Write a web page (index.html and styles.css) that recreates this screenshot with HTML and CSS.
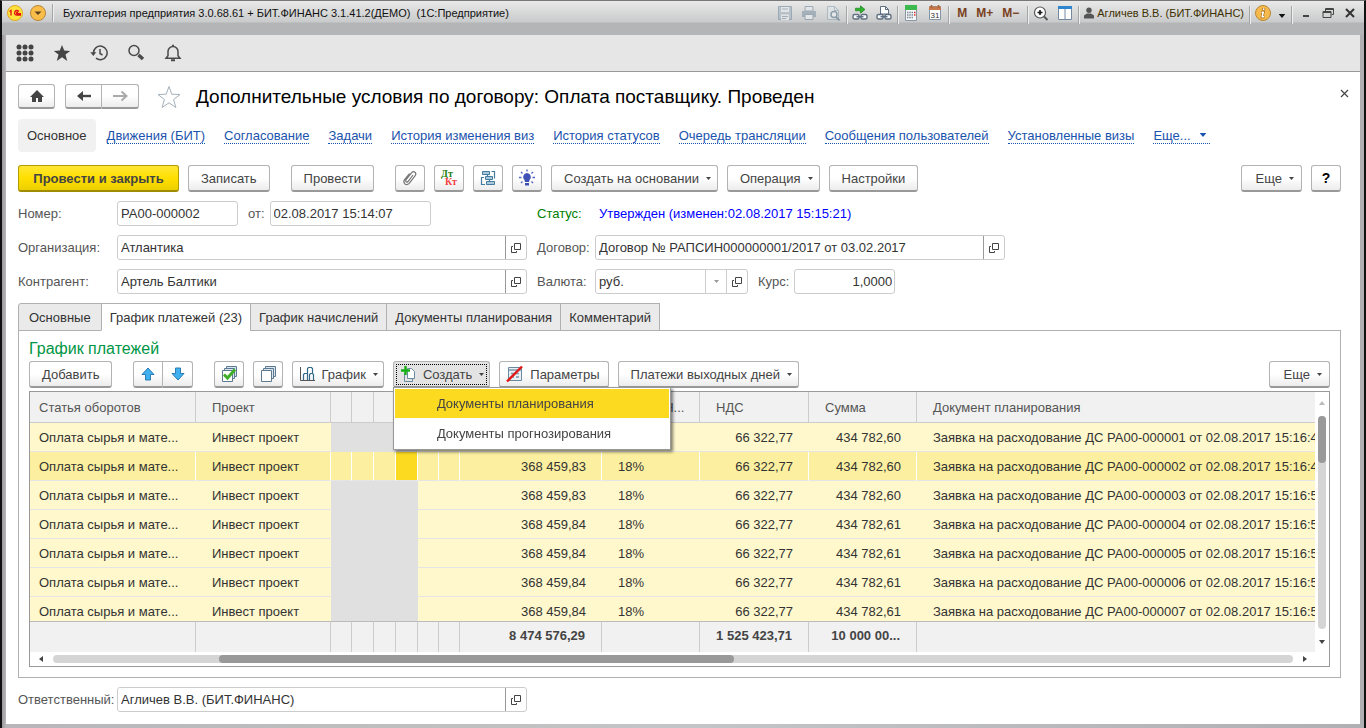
FILE: index.html
```html
<!DOCTYPE html>
<html lang="ru">
<head>
	<meta charset="utf-8">
	<title>Бухгалтерия предприятия</title>
	<link rel="stylesheet" href="styles.css">
</head>
<body>

	<!-- shared icons -->
	<svg class="sprite">
		<symbol id="open" viewBox="0 0 10 10">
			<path d="M3.500 .5h6v6h-6zM2 3.500H.5v6h5V8" fill="none" stroke="#444"/>
		</symbol>
		<symbol id="caret" viewBox="0 0 5 3"><path d="M0 0h5L2.500 3z" fill="currentColor"/></symbol>
	</svg>

	<div class="window">

		<header class="titlebar">
			<svg class="logo" viewBox="0 0 16 16">
				<circle cx="8" cy="8" r="7.500" fill="#ffe23e" stroke="#e0a81e"/>
				<path d="M2.500 6.500l1.500-1v5M12 6.500q-2.500-2-4 0-1.200 2.500 1 3.500h5M11 7.700q-1.200-.6-1.500.4 0 .6 1 .6h3.500" fill="none" stroke="#e01010" stroke-width="1.300"/>
			</svg>
			<button class="round" aria-label="Меню">
				<svg viewBox="0 0 16 16">
					<circle cx="8" cy="8" r="7.500" fill="#f9bd4a" stroke="#b98735"/>
					<path d="M4.500 6.500h7L8 10z" fill="#5a4020"/>
				</svg>
			</button>
			<i class="sep"></i>
			<div class="app-name">Бухгалтерия предприятия 3.0.68.61 + БИТ.ФИНАНС 3.1.41.2(ДЕМО)  (1С:Предприятие)</div>

			<div class="tools">
				<div class="tool-group">
					<button aria-label="Сохранить" class="dim"><svg viewBox="0 0 16 16"><path d="M1.500 1.500h13v13h-13z" fill="#a9b8c4" stroke="#8496a5"/><path d="M4 2h8v5H4zM4 9.500h8V15H4z" fill="#e6eaed"/><path d="M5 4h6M5 11.500h6M5 13.500h4" stroke="#8fa0ad"/></svg></button>
					<button aria-label="Печать" class="dim"><svg viewBox="0 0 16 16"><path d="M4 1.500h8V6H4z" fill="#e4e8eb" stroke="#8496a5"/><path d="M1 6h14v6H1z" fill="#8fa1af"/><path d="M4 9.500h8v5H4z" fill="#eceff1" stroke="#8496a5"/></svg></button>
					<button aria-label="Просмотр" class="dim"><svg viewBox="0 0 16 16"><path d="M2.500 1.500h7l4 4v9h-11z" fill="#dfe5e9" stroke="#9bacb8"/><path d="M9.500 1.500v4h4" fill="none" stroke="#9bacb8"/><circle cx="9" cy="9.500" r="3" fill="#edf1f3" stroke="#6f8799" stroke-width="1.500"/><path d="M11 12l3.500 3.500" stroke="#6f8799" stroke-width="2"/></svg></button>
				</div>
				<i class="sep"></i>
				<div class="tool-group">
					<button aria-label="Перейти"><svg viewBox="0 0 16 16"><path d="M3.500 3.200h5V.8l4.500 3.700-4.500 3.700V5.800h-5z" fill="#2bb52b" stroke="#137013" stroke-width=".6"/><rect x="1" y="9.500" width="6" height="4.500" rx="1.500" fill="#fff" stroke="#5d6f80" stroke-width="1.400"/><rect x="9" y="9.500" width="6" height="4.500" rx="1.500" fill="#fff" stroke="#5d6f80" stroke-width="1.400"/><path d="M4.500 11.700h7" stroke="#5d6f80" stroke-width="1.400"/></svg></button>
					<button aria-label="Ссылка"><svg viewBox="0 0 16 16"><path d="M4.500 1.500h5l3 3V9h-8z" fill="#fff" stroke="#5d6f80"/><path d="M9.500 1.500v3h3" fill="none" stroke="#5d6f80"/><rect x="1" y="9.500" width="6" height="4.500" rx="1.500" fill="#fff" stroke="#5d6f80" stroke-width="1.400"/><rect x="9" y="9.500" width="6" height="4.500" rx="1.500" fill="#fff" stroke="#5d6f80" stroke-width="1.400"/><path d="M4.500 11.700h7" stroke="#5d6f80" stroke-width="1.400"/></svg></button>
				</div>
				<i class="sep"></i>
				<div class="tool-group">
					<button aria-label="Калькулятор"><svg viewBox="0 0 16 16"><path d="M2.500 .500h11v15h-11z" fill="#f4f6f7" stroke="#8b98a3"/><path d="M2 0h12v5H2z" fill="#3cb94f"/><path d="M4 7.500h6M4 10h6M4 12.500h6" stroke="#7b8a97" stroke-width="1.500" stroke-dasharray="1.500 .8"/><path d="M11 7.500h1.500M11 10h1.500" stroke="#e03030" stroke-width="1.500"/></svg></button>
					<button aria-label="Календарь"><svg viewBox="0 0 16 16"><path d="M2.500 1.500h11v13h-11z" fill="#fff" stroke="#8496a5"/><path d="M2 1.500h12V5H2z" fill="#c8794c"/><path d="M4.500 0v3M11.500 0v3" stroke="#a86238" stroke-width="1.500"/><text x="8" y="13" text-anchor="middle" class="day">31</text></svg></button>
				</div>
				<i class="sep"></i>
				<div class="tool-group memory">
					<button>M</button>
					<button>M+</button>
					<button>M−</button>
				</div>
				<i class="sep"></i>
				<div class="tool-group">
					<button aria-label="Масштаб"><svg viewBox="0 0 16 16"><circle cx="7" cy="7.500" r="5.500" fill="#fff" stroke="#555" stroke-width="1.200"/><path d="M7 5v5M4.500 7.500h5" stroke="#111" stroke-width="1.600"/><path d="M11 11.500l3.500 3.500" stroke="#555" stroke-width="2"/></svg></button>
					<button aria-label="Панели"><svg viewBox="0 0 16 16"><path d="M1.500 1.500h13v13h-13z" fill="#fff" stroke="#7289a0"/><path d="M1 1h14v3H1z" fill="#2f86cf"/><path d="M8 4v10.500" stroke="#7289a0"/></svg></button>
				</div>
				<i class="sep"></i>
				<div class="user">
					<svg viewBox="0 0 10 12"><circle cx="5" cy="3.200" r="2.700" fill="#555"/><path d="M0 11.500V8.500L3 6.500h4l3 2v3z" fill="#555"/></svg>
					<span>Агличев В.В. (БИТ.ФИНАНС)</span>
				</div>
				<i class="sep"></i>
				<div class="tool-group info">
					<button aria-label="Справка"><svg viewBox="0 0 16 16"><circle cx="8" cy="8" r="7.500" fill="#f6b94b" stroke="#b98735"/><path d="M8.700 3v2.200M6.300 7.200h1.900l-1 4.600h2.200" fill="none" stroke="#9a5f10" stroke-width="2.800"/><path d="M8.700 3.200v1.800M6.500 7.200h1.700l-1 4.600h2" fill="none" stroke="#fff" stroke-width="1.600"/></svg></button>
					<button aria-label="Еще" class="more"><svg viewBox="0 0 5 3"><use href="#caret"/></svg></button>
				</div>
				<i class="sep"></i>
				<div class="tool-group win">
					<button aria-label="Свернуть"><svg viewBox="0 0 12 12"><path d="M3 9h6" stroke="#444" stroke-width="2"/></svg></button>
					<button aria-label="Восстановить"><svg viewBox="0 0 12 12"><path d="M3.500 4V1.500h8v6h-2M1 4.500h8v6H1zM1 5.500h8M3.500 2.500h8" fill="none" stroke="#444"/></svg></button>
					<button aria-label="Закрыть"><svg viewBox="0 0 12 12"><path d="M2 2l8 8M10 2l-8 8" stroke="#333" stroke-width="2"/></svg></button>
				</div>
			</div>
		</header>

		<div class="client">

			<nav class="mainbar">
				<button aria-label="Меню функций"><svg viewBox="0 0 18 18" fill="#444"><circle cx="3" cy="3" r="2.500"/><circle cx="9" cy="3" r="2.500"/><circle cx="15" cy="3" r="2.500"/><circle cx="3" cy="9" r="2.500"/><circle cx="9" cy="9" r="2.500"/><circle cx="15" cy="9" r="2.500"/><circle cx="3" cy="15" r="2.500"/><circle cx="9" cy="15" r="2.500"/><circle cx="15" cy="15" r="2.500"/></svg></button>
				<button aria-label="Избранное"><svg viewBox="0 0 18 18"><path d="M9 1l2.200 5.600 6 .3-4.700 3.700L14.200 17 9 13.300 3.800 17l1.700-6.400L.8 6.900l6-.3z" fill="#444"/></svg></button>
				<button aria-label="История"><svg viewBox="0 0 18 18"><path d="M3.500 9A6.800 6.800 0 1 1 6 14.200" fill="none" stroke="#4a4a4a" stroke-width="1.500"/><path d="M.3 8.300h6L3.300 12z" fill="#4a4a4a"/><path d="M10 5v4.500l2.500 1.500" fill="none" stroke="#4a4a4a" stroke-width="1.500"/></svg></button>
				<button aria-label="Поиск"><svg viewBox="0 0 18 18"><circle cx="7" cy="6.500" r="5" fill="none" stroke="#4a4a4a" stroke-width="1.500"/><path d="M11.500 11l4.500 4" stroke="#4a4a4a" stroke-width="3.400"/></svg></button>
				<button aria-label="Уведомления"><svg viewBox="0 0 18 18"><path d="M2 14.200h14l-2-2.500V7.500a5 5 0 0 0-10 0v4.200z" fill="none" stroke="#4a4a4a" stroke-width="1.500"/><path d="M9 .800v2M7 16.300h4" stroke="#4a4a4a" stroke-width="2"/></svg></button>
			</nav>

			<main class="form">

				<div class="heading">
					<button class="btn home" aria-label="Домой"><svg width="16" height="14" viewBox="0 0 16 14"><path d="M8 1L1 8h2v5h4V9h2v4h4V8h2z" fill="#444"/></svg></button>
					<div class="pair">
						<button class="btn" aria-label="Назад"><svg width="16" height="12" viewBox="0 0 16 12"><path d="M3 6h12" stroke="#444" stroke-width="2.400"/><path d="M7 1v10L1 6z" fill="#444"/></svg></button>
						<button class="btn" aria-label="Вперед"><svg width="16" height="12" viewBox="0 0 16 12"><path d="M1 6h12" stroke="#aaa" stroke-width="2"/><path d="M9.500 1.500L14.500 6l-5 4.500" fill="none" stroke="#aaa" stroke-width="2"/></svg></button>
					</div>
					<svg class="star" viewBox="0 0 24 24"><path d="M12 1.500l2.800 7.700 8.200.3-6.400 5 2.300 8L12 17.800l-6.900 4.700 2.300-8L1 9.500l8.200-.3z" fill="#fff" stroke="#a5b1bb"/></svg>
					<h1>Дополнительные условия по договору: Оплата поставщику. Проведен</h1>
					<button class="close" aria-label="Закрыть форму"><svg viewBox="0 0 9 9"><path d="M1 1l7 7M8 1L1 8" stroke="#444" stroke-width="1.200"/></svg></button>
				</div>

				<nav class="links">
					<span class="current-page">Основное</span>
					<a href="#">Движения (БИТ)</a>
					<a href="#">Согласование</a>
					<a href="#">Задачи</a>
					<a href="#">История изменения виз</a>
					<a href="#">История статусов</a>
					<a href="#">Очередь трансляции</a>
					<a href="#">Сообщения пользователей</a>
					<a href="#">Установленные визы</a>
					<a href="#">Еще...<svg class="link-caret" viewBox="0 0 5 3"><use href="#caret"/></svg></a>
				</nav>

				<div class="commands">
					<button class="btn primary">Провести и закрыть</button>
					<button class="btn">Записать</button>
					<button class="btn apart">Провести</button>
					<button class="btn icon apart" aria-label="Файлы"><svg width="16" height="18" viewBox="0 0 16 18"><path d="M11 6l-5 6.500q-1 1.200-2 .4-.9-.9.100-2.200l5.600-7q1.600-1.800 3.300-.5 1.600 1.500.2 3.500l-6 7.600q-2.200 2.200-4.300.6-2-1.900-.3-4.200L7.500 4.500" fill="none" stroke="#777" stroke-width="1.200"/></svg></button>
					<button class="btn icon" aria-label="Дт Кт"><svg width="18" height="18" viewBox="0 0 18 18"><text x="1" y="8" class="dt">Дт</text><text x="5" y="16" class="dt kt">Кт</text></svg></button>
					<button class="btn icon" aria-label="Структура"><svg width="18" height="18" viewBox="0 0 18 18"><path d="M3.500 2.500h7v3h-7zM6.500 7.500h7v3h-7zM7.500 12.500h8v3h-8z" fill="#a9c8dc" stroke="#447c9f"/><path d="M12.500 2.500h3v7M5 8.500H2.500v7H6M8.500 5.500v2M10.500 10.500v2" fill="none" stroke="#447c9f" stroke-width="1.200"/></svg></button>
					<button class="btn icon" aria-label="Подсказка"><svg width="18" height="18" viewBox="0 0 18 18"><path d="M9 4a4 4 0 0 1 2.500 7L11 13H7l-.5-2A4 4 0 0 1 9 4z" fill="#3f51b5"/><path d="M7 14h4v2.500H7z" fill="#3f51b5"/><path d="M9 .500v2M3 3l1.500 1.500M15 3l-1.500 1.500M1 8.500h2.500M14.500 8.500H17M3 14l1.500-1.500M15 14l-1.500-1.500" stroke="#5666c0" stroke-width="1.400"/></svg></button>
					<button class="btn drop">Создать на основании<svg class="caret" viewBox="0 0 5 3"><use href="#caret"/></svg></button>
					<button class="btn drop">Операция<svg class="caret" viewBox="0 0 5 3"><use href="#caret"/></svg></button>
					<button class="btn">Настройки</button>
					<button class="btn drop right">Еще<svg class="caret" viewBox="0 0 5 3"><use href="#caret"/></svg></button>
					<button class="btn icon help">?</button>
				</div>

				<div class="fields">
					<label for="number">Номер:</label>
					<div class="line">
						<input id="number" class="w-number" value="РА00-000002">
						<label for="date" class="mid">от:</label>
						<input id="date" class="w-date" value="02.08.2017 15:14:07">
					</div>
					<span class="second status">Статус:</span>
					<span class="status-value">Утвержден (изменен:02.08.2017 15:15:21)</span>

					<label for="org">Организация:</label>
					<div class="picker">
						<input id="org" value="Атлантика">
						<button aria-label="Открыть"><svg><use href="#open"/></svg></button>
					</div>
					<label for="contract" class="second">Договор:</label>
					<div class="picker">
						<input id="contract" value="Договор № РАПСИН000000001/2017 от 03.02.2017">
						<button aria-label="Открыть"><svg><use href="#open"/></svg></button>
					</div>

					<label for="partner">Контрагент:</label>
					<div class="picker">
						<input id="partner" value="Артель Балтики">
						<button aria-label="Открыть"><svg><use href="#open"/></svg></button>
					</div>
					<label for="currency" class="second">Валюта:</label>
					<div class="line">
						<div class="picker currency">
							<select id="currency"><option>руб.</option></select>
							<span class="arrow"><svg class="caret" viewBox="0 0 5 3"><use href="#caret"/></svg></span>
							<button aria-label="Открыть"><svg><use href="#open"/></svg></button>
						</div>
						<label for="rate" class="mid">Курс:</label>
						<input id="rate" class="w-rate" value="1,0000">
					</div>
				</div>

				<div class="tabs">
					<button>Основные</button>
					<button class="active">График платежей (23)</button>
					<button>График начислений</button>
					<button>Документы планирования</button>
					<button>Комментарий</button>
				</div>

				<section class="panel">
					<h2>График платежей</h2>

					<div class="commands">
						<button class="btn">Добавить</button>
						<div class="pair apart">
							<button class="btn icon" aria-label="Вверх"><svg width="14" height="14" viewBox="0 0 14 14"><path d="M7 1l6 6.500H9.500V13h-5V7.500H1z" fill="#41b0ee" stroke="#2b7db3"/></svg></button>
							<button class="btn icon" aria-label="Вниз"><svg width="14" height="14" viewBox="0 0 14 14"><path d="M7 13l6-6.500H9.500V1h-5v5.500H1z" fill="#41b0ee" stroke="#2b7db3"/></svg></button>
						</div>
						<button class="btn icon apart" aria-label="Отметить все"><svg width="18" height="18" viewBox="0 0 18 18"><path d="M6.500 4V1.500h10v10H14M4.500 6V3.500h10v10H12" fill="#dbe6ee" stroke="#5b7a91"/><path d="M2.500 5.500h10v11h-10z" fill="#fff" stroke="#5b7a91"/><path d="M4 9.500l3.500 3.500L15 4.500" fill="none" stroke="#3fae29" stroke-width="3"/></svg></button>
						<button class="btn icon" aria-label="Снять отметки"><svg width="18" height="18" viewBox="0 0 18 18"><path d="M6.500 4V1.500h10v10H14M4.500 6V3.500h10v10H12" fill="#dbe6ee" stroke="#5b7a91"/><path d="M2.500 5.500h10v11h-10z" fill="#fff" stroke="#5b7a91"/></svg></button>
						<button class="btn drop with-icon"><svg width="16" height="16" viewBox="0 0 16 16"><path d="M1.500 1v13.500H16" fill="none" stroke="#555"/><path d="M4.500 14V8.500l1-1h3v6.500M8.500 7.500v-5l1-1h3l1 1v5M10.500 14V8.500l1-1h2l1 1V14" fill="none" stroke="#34698c" stroke-width="1.200"/></svg>График<svg class="caret" viewBox="0 0 5 3"><use href="#caret"/></svg></button>
						<div class="menu-host">
							<button class="btn drop with-icon pressed"><svg width="16" height="16" viewBox="0 0 16 16"><path d="M6.500 2.500h4l3 3v7h-7z" fill="#fff" stroke="#6a8aa0"/><path d="M3.500 7v8.500h8V13" fill="none" stroke="#6a8aa0"/><path d="M4.500 0v9M0 4.500h9" stroke="#16b016" stroke-width="2.400"/></svg>Создать<svg class="caret" viewBox="0 0 5 3"><use href="#caret"/></svg></button>
							<div class="menu">
								<button class="selected">Документы планирования</button>
								<button>Документы прогнозирования</button>
							</div>
						</div>
						<button class="btn with-icon"><svg width="18" height="18" viewBox="0 0 18 18"><path d="M2.500 2.500h13v13h-13z" fill="#e9eff3" stroke="#6a8aa0"/><path d="M3 5h12M5 8.500h3M5 12h3M10 8.500h3M10 12h3" stroke="#7d9ab0" stroke-width="1.400"/><path d="M1 16.500L16 1.500" stroke="#e01818" stroke-width="2.400"/></svg>Параметры</button>
						<button class="btn drop">Платежи выходных дней<svg class="caret" viewBox="0 0 5 3"><use href="#caret"/></svg></button>
						<button class="btn drop right">Еще<svg class="caret" viewBox="0 0 5 3"><use href="#caret"/></svg></button>
					</div>

					<div class="grid">
						<div class="viewport">
							<table>
								<colgroup>
									<col class="c-item"><col class="c-project">
									<col class="c-narrow"><col class="c-mark"><col class="c-mark"><col class="c-mark"><col class="c-narrow"><col class="c-narrow">
									<col class="c-net"><col class="c-rate"><col class="c-vat"><col class="c-sum"><col>
								</colgroup>
								<thead>
									<tr>
										<th>Статья оборотов</th><th class="pad">Проект</th>
										<th></th><th></th><th></th><th></th><th></th><th></th>
										<th></th><th class="pad">Ставка Н...</th><th class="pad">НДС</th><th class="pad">Сумма</th><th class="pad">Документ планирования</th>
									</tr>
								</thead>
								<tbody id="rows"></tbody>
								<tfoot>
									<tr>
										<td></td><td></td><td></td><td></td><td></td><td></td><td></td><td></td>
										<td class="num">8 474 576,29</td><td></td><td class="num">1 525 423,71</td><td class="num">10 000 00...</td><td></td>
									</tr>
								</tfoot>
							</table>
						</div>
						<div class="vscroll">
							<svg class="up" viewBox="0 0 6 4"><path d="M0 4h6L3 0z"/></svg>
							<div class="track"><div class="thumb"></div></div>
							<svg viewBox="0 0 6 4"><path d="M0 0h6L3 4z"/></svg>
						</div>
						<div class="hscroll">
							<svg viewBox="0 0 4 6"><path d="M4 0v6L0 3z"/></svg>
							<div class="track"><div class="thumb"></div></div>
							<svg viewBox="0 0 4 6"><path d="M0 0v6l4-3z"/></svg>
						</div>
					</div>
				</section>

				<div class="fields">
					<label for="owner">Ответственный:</label>
					<div class="picker">
						<input id="owner" value="Агличев В.В. (БИТ.ФИНАНС)">
						<button aria-label="Открыть"><svg><use href="#open"/></svg></button>
					</div>
				</div>

			</main>
		</div>
	</div>

	<script>
		// net amount, total, time of the planning document
		let rows = [
			['368 459,83', '434 782,60', '15:16:48'],
			['368 459,83', '434 782,60', '15:16:49'],
			['368 459,83', '434 782,60', '15:16:50'],
			['368 459,84', '434 782,61', '15:16:51'],
			['368 459,84', '434 782,61', '15:16:52'],
			['368 459,84', '434 782,61', '15:16:53'],
			['368 459,84', '434 782,61', '15:16:54']
		];
		let current = 1;

		let html = '';
		rows.forEach(function(row, i){
			let marks = '<td class="off"></td>'.repeat(4);
			if(i === current){
				marks = '<td></td><td></td><td></td><td class="cell"></td>';
			}
			html += '<tr' + (i === current ? ' class="current"' : '') + '>'
				+ '<td>Оплата сырья и мате...</td><td class="pad">Инвест проект</td>'
				+ marks + '<td></td><td></td>'
				+ '<td class="num">' + row[0] + '</td><td class="pad">18%</td>'
				+ '<td class="num">66 322,77</td><td class="num">' + row[1] + '</td>'
				+ '<td class="pad">Заявка на расходование ДС РА00-00000' + (i + 1) + ' от 02.08.2017 ' + row[2] + '</td></tr>';
		});
		document.querySelector('#rows').innerHTML = html;
	</script>

</body>
</html>
```
FILE: styles.css
```css
*{
	box-sizing: border-box;
}

body{
	margin: 0;
	font-family: "Liberation Sans", Arial, sans-serif;
	font-size: 13px;
	color: #333;
}

button, input, select{
	font: inherit;
	color: inherit;
	margin: 0;
}

button{
	padding: 0;
	border: none;
	background: none;
	white-space: nowrap;
}

.sprite{
	display: none;
}

svg{
	display: block;
	flex: none;
}

/* window frame */

.window{
	display: flex;
	flex-direction: column;
	min-height: 100vh;
	padding: 0 4px 5px;
	border-left: 2px solid #111;
	border-right: 2px solid #111;
	border-top: 1px solid #777;
	background: linear-gradient(90deg, #9c9a9c, #b8b6b8 4px, #c4c5c6 50%, #b0b0b2);
}

.titlebar{
	display: flex;
	align-items: center;
	height: 34px;
	margin: 0 -4px;
	padding: 0 8px 10px 5px;
	background: linear-gradient(#e9e9e9, #c9cacb 21px, #b4b5b7 22px, #b4b5b7);
	font-size: 11px;
	color: #111;
}

.titlebar svg{
	width: 16px;
	height: 16px;
}

.round{
	margin-left: 7px;
}

.sep{
	align-self: flex-start;
	width: 1px;
	height: 18px;
	margin-top: 3px;
	background: #a5a5a5;
	box-shadow: 1px 0 #eee;
}

.titlebar > .sep{
	margin-left: 6px;
}

.app-name{
	margin-left: 10px;
	white-space: pre;
}

.tools{
	display: flex;
	align-items: center;
	gap: 5px;
	margin-left: auto;
}

.tool-group{
	display: flex;
	align-items: center;
	gap: 8px;
}

.dim{
	opacity: .7;
}

.day{
	font-size: 8px;
	fill: #333;
}

.memory{
	padding: 0 3px;
	gap: 9px;
	font-size: 12px;
	font-weight: bold;
	color: #7a4020;
}

.user{
	display: flex;
	align-items: center;
	gap: 3px;
	color: #3d3000;
}

.titlebar .user svg{
	width: 10px;
	height: 12px;
}

.info{
	gap: 7px;
}

.titlebar .more svg{
	width: 8px;
	height: 4px;
	margin-top: 6px;
}

.win{
	gap: 10px;
	margin-left: 3px;
}

.titlebar .win svg{
	width: 12px;
	height: 12px;
}

.client{
	flex: 1;
	background: #fff;
}

.mainbar{
	display: flex;
	align-items: center;
	gap: 19px;
	height: 37px;
	padding-left: 10px;
	background: #e6e6e6;
	border-bottom: 1px solid #999;
}

.mainbar svg{
	width: 18px;
	height: 18px;
}

/* form */

.form{
	padding: 12px 19px 12px 12px;
}

.btn{
	display: flex;
	align-items: center;
	justify-content: center;
	height: 27px;
	padding: 0 12px;
	border: 1px solid #b3b3b3;
	border-bottom: 2px solid #999;
	border-radius: 3px;
	background: linear-gradient(#fff 50%, #ececec);
	color: #444;
}

.heading{
	display: flex;
	align-items: center;
	height: 25px;
}

.heading .btn{
	width: 37px;
	height: 25px;
	padding: 0;
}

.pair{
	display: flex;
}

.pair .btn:first-child{
	border-radius: 3px 0 0 3px;
}

.pair .btn:last-child{
	border-left: none;
	border-radius: 0 3px 3px 0;
}

.heading .pair{
	margin-left: 10px;
}

.star{
	width: 24px;
	height: 24px;
	margin-left: 18px;
}

h1{
	margin: 0 0 0 15px;
	font-size: 19px;
	font-weight: normal;
	color: #000;
}

.close{
	align-self: flex-start;
	margin: 5px -8px 0 auto;
}

.close svg{
	width: 9px;
	height: 9px;
}

.links{
	display: flex;
	align-items: center;
	gap: 19px;
	margin-top: 10px;
}

.current-page{
	padding: 9px;
	margin-right: -8px;
	border-radius: 4px;
	background: #f1f1f1;
	line-height: 15px;
}

.links a{
	display: flex;
	align-items: center;
	color: #1a53ad;
	line-height: 15px;
	text-decoration: none;
	border-bottom: 1px dotted #1a53ad;
}

.link-caret{
	width: 8px;
	height: 4px;
	margin: 0 3px 0 8px;
}

.commands{
	display: flex;
	gap: 9px;
	margin-top: 13px;
}

.primary{
	min-width: 161px;
	border-color: #b39b00;
	border-bottom-color: #a08c00;
	background: linear-gradient(#ffe735, #ffdf00 50%, #eccf00);
	font-weight: bold;
}

.apart{
	margin-left: 12px;
}

.icon{
	width: 30px;
	padding: 0;
}

.caret{
	width: 5px;
	height: 3px;
	margin-left: 7px;
}

.drop{
	padding-right: 6px;
}

.right{
	margin-left: auto;
	padding: 0 7px 0 14px;
}

.help{
	font-size: 14px;
	font-weight: bold;
	color: #000;
}

.dt{
	font-family: "Liberation Serif", serif;
	font-size: 10px;
	font-weight: bold;
	fill: #1f8010;
}

.kt{
	fill: #f04040;
}

.fields{
	display: grid;
	grid-template-columns: 99px 410px 68px 410px;
	grid-auto-rows: 25px;
	row-gap: 9px;
	align-items: center;
	margin-top: 9px;
}

.fields label{
	color: #555;
	white-space: nowrap;
}

.second{
	padding-left: 10px;
}

.status{
	color: #008000;
}

.status-value{
	padding-left: 4px;
	color: #00f;
}

.line{
	display: flex;
	align-items: center;
}

.mid{
	margin: 0 5px 0 10px;
}

input, select{
	height: 25px;
	min-width: 0;
	padding: 0 3px;
	border: 1px solid #ccc;
	border-radius: 3px;
	background: #fff;
}

.w-number{
	width: 121px;
}

.w-date{
	width: 161px;
}

.w-rate{
	width: 101px;
	text-align: right;
	padding-right: 2px;
}

.picker{
	display: flex;
	height: 25px;
	border: 1px solid #ccc;
	border-radius: 3px;
}

.picker input, .picker select{
	flex: 1;
	height: 23px;
	border: none;
	appearance: none;
}

.picker button, .arrow{
	display: flex;
	align-items: center;
	justify-content: center;
	width: 21px;
	border-left: 1px solid #999;
}

.picker button svg{
	width: 10px;
	height: 10px;
}

.currency{
	width: 153px;
}

.currency button, .arrow{
	border-left-color: #ccc;
}

.arrow{
	color: #999;
}

.arrow .caret{
	margin: 0;
}

/* tabs */

.tabs{
	display: flex;
	margin-top: 9px;
	position: relative;
}

.tabs button{
	height: 28px;
	padding: 0 8px;
	margin-right: -1px;
	border: 1px solid #b0b0b0;
	background: #eaeaea;
}

.tabs button:first-child{
	padding: 0 10px;
	border-radius: 3px 0 0 0;
}

.tabs .active{
	background: #fff;
	border-bottom-color: #fff;
}

.panel{
	margin-top: -1px;
	padding: 10px;
	border: 1px solid #b0b0b0;
}

h2{
	margin: 0;
	font-size: 16px;
	line-height: 16px;
	font-weight: normal;
	color: #009646;
}

.panel .commands{
	margin-top: 4px;
}

.with-icon{
	padding-left: 6px;
	padding-right: 8px;
}

.with-icon.drop{
	padding-right: 5px;
}

.with-icon > svg:first-child{
	margin-right: 6px;
}

.menu-host{
	position: relative;
}

.pressed{
	padding-left: 7px;
	background: #e3e3e3;
	outline: 1px dotted #000;
	outline-offset: -4px;
}

.menu{
	position: absolute;
	z-index: 2;
	top: 26px;
	left: 0;
	display: flex;
	flex-direction: column;
	gap: 1px;
	width: 278px;
	padding: 1px;
	border: 1px solid #999;
	background: #fff;
	box-shadow: 2px 2px 3px rgba(0,0,0,.5);
}

.menu button{
	height: 29px;
	padding-left: 42px;
	text-align: left;
	color: #444;
}

.menu .selected{
	background: #fcda20;
}

/* payment table */

.grid{
	display: grid;
	grid-template-columns: 1fr 14px;
	margin-top: 3px;
	border: 1px solid #999;
}

.viewport{
	height: 260px;
	overflow: hidden;
}

table{
	width: 100%;
	table-layout: fixed;
	border-collapse: separate;
	border-spacing: 0;
}

.c-item{ width: 166px; }
.c-project{ width: 135px; }
.c-mark{ width: 22px; }
.c-narrow{ width: 21px; }
.c-net{ width: 142px; }
.c-rate{ width: 98px; }
.c-vat{ width: 109px; }
.c-sum{ width: 108px; }

th, td{
	overflow: hidden;
	padding: 0 9px;
	text-align: left;
	font-weight: normal;
	white-space: nowrap;
}

th{
	height: 31px;
	color: #555;
	background: #f1f1f1;
	border-right: 1px solid #ccc;
	border-bottom: 1px solid #ccc;
}

.pad{
	padding-left: 16px;
	padding-right: 0;
}

td{
	height: 29px;
	background: #fff8cc;
	border-bottom: 1px solid #e5e5e5;
}

.num{
	text-align: right;
	padding-right: 16px;
}

td.off{
	background: #e0e0e0;
	border-bottom-color: #e0e0e0;
}

.current td{
	background: #fcf0a0;
	border-right: 1px solid #fff;
}

.current .num{
	padding-right: 15px;
}

.current .cell{
	background: #fcda20;
}

tfoot td{
	position: sticky;
	bottom: 0;
	height: 31px;
	padding-bottom: 3px;
	background: #f1f1f1;
	border-top: 1px solid #bbb;
	border-right: 1px solid #ccc;
	border-bottom: none;
	font-weight: bold;
	color: #444;
}

th:last-child, tr td:last-child{
	border-right: none;
}

.vscroll, .hscroll{
	display: flex;
	align-items: center;
	fill: #444;
}

.vscroll{
	flex-direction: column;
	gap: 11px;
	padding: 9px 0 8px;
}

.vscroll svg{
	width: 6px;
	height: 4px;
}

.vscroll .up{
	fill: #bbb;
}

.track{
	flex: 1;
	border-radius: 4px;
	background: #d5d5d5;
}

.thumb{
	border-radius: 4px;
	background: #999;
}

.vscroll .track{
	width: 8px;
}

.vscroll .thumb{
	height: 22%;
}

.hscroll{
	gap: 10px;
	height: 14px;
	padding: 0 8px 0 9px;
}

.hscroll svg{
	width: 4px;
	height: 6px;
}

.hscroll .thumb{
	width: 41.5%;
	height: 8px;
	margin-left: 13.4%;
}
```
